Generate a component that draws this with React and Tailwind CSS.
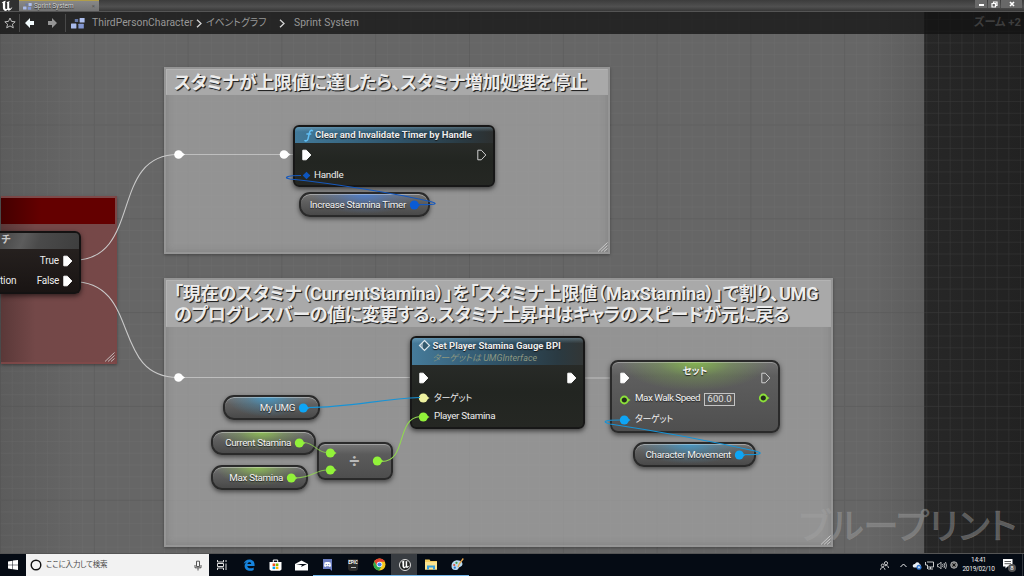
import React from "react";

const ExecPin = ({ hollow = false }) => (
  <svg className="block h-[12px] w-[11px] shrink-0" viewBox="0 0 11 12">
    <path
      d="M1.8 1.2H5.3L9.8 6L5.3 10.8H1.8Z"
      fill={hollow ? "none" : "#fff"}
      stroke={hollow ? "#d0d0d0" : "#fff"}
      strokeWidth="1"
      strokeLinejoin="round"
    />
  </svg>
);

const DataPin = ({ color, hollow = false }) => (
  <svg className="block h-[10px] w-[12px] shrink-0" viewBox="0 0 12 10">
    <path d="M8.2 3L11.6 5L8.2 7Z" fill={color} />
    <circle cx="5.3" cy="5" r={hollow ? 3.5 : 4.5} fill={hollow ? "#242b1c" : color} stroke={color} strokeWidth={hollow ? 1.8 : 0} />
  </svg>
);

const Grip = () => (
  <svg className="absolute bottom-0 right-0 h-[10px] w-[11px]" viewBox="0 0 11 10">
    <path d="M1 9.5L10.5 0.5M4 9.5L10.5 3.5M7 9.5L10.5 6.5" stroke="#d8d8d8" strokeWidth="1" fill="none" opacity="0.8" />
  </svg>
);

const Comment = ({ className, title, titleClass }) => (
  <section className={"absolute border-2 border-[#9c9c9c]/30 bg-[#a6a6a6]/70 shadow-[0_1px_3px_rgba(0,0,0,0.35),inset_0_0_7px_rgba(80,80,80,0.3)] " + className}>
    <div className={"border border-[#b3b3b3] border-r-[#a8a8a8] border-b-[#a8a8a8] bg-[#a9a9a9] pl-[7px] font-bold whitespace-pre text-[#ececec] [font-feature-settings:'palt'] [text-shadow:1px_1px_1px_#222,1px_1px_0_#444] " + titleClass}>
      {title}
    </div>
    <Grip />
  </section>
);

const GLOW = {
  blue: "bg-[radial-gradient(ellipse_42%_95%_at_50%_0%,rgba(70,130,225,0.8),rgba(70,130,225,0.3)_50%,transparent),linear-gradient(#747474,#606060_35%,#494949)]",
  sky: "bg-[radial-gradient(ellipse_45%_95%_at_46%_0%,rgba(60,160,215,0.8),rgba(60,160,215,0.3)_50%,transparent),linear-gradient(#747474,#606060_35%,#494949)]",
  green: "bg-[radial-gradient(ellipse_45%_90%_at_48%_0%,rgba(145,200,80,0.85),rgba(145,200,80,0.3)_50%,transparent),linear-gradient(#747474,#606060_35%,#494949)]",
};

const Getter = ({ className, glow, color, text }) => (
  <div className={"absolute flex h-[25px] items-center justify-end rounded-[11px] border-2 border-[#2a2a2a] text-[9.8px] tracking-[-0.32px] text-[#f2f2f2] shadow-[0_2px_4px_rgba(0,0,0,0.5),inset_0_1px_0_rgba(255,255,255,0.35)] " + GLOW[glow] + " " + className}>
    <span className="mr-[3px] whitespace-nowrap pt-px [text-shadow:0_1px_1px_#222]">{text}</span>
    <DataPin color={color} />
  </div>
);

const NODE = "absolute overflow-hidden rounded-[6px] border-2 border-[#171717] bg-[linear-gradient(#2e302e,#222521_60%,#252723)] text-[9.5px] text-[#ececec] shadow-[0_2px_5px_rgba(0,0,0,0.6)]";

const BreadChevron = () => (
  <svg className="h-[9px] w-[6px] shrink-0" viewBox="0 0 6 9"><path d="M1 .7L5 4.5L1 8.3" fill="none" stroke="#d4d4d4" strokeWidth="1.3" /></svg>
);

const GraphIcon = ({ className }) => (
  <svg className={className} viewBox="0 0 14 11">
    <rect x="3.8" y="1" width="3.4" height="3" fill="#6577a8" />
    <rect x="8.6" y="0" width="5" height="4.6" rx=".5" fill="#aebfee" />
    <rect x="0" y="5.6" width="5.4" height="4.8" rx=".5" fill="#a9baea" />
    <rect x="7.4" y="5.8" width="5.4" height="4.8" rx=".5" fill="#8296d2" />
  </svg>
);

const UnrealU = ({ className }) => (
  <svg className={className} viewBox="0 0 12 12">
    <path d="M.5 3.3C1.6 1.7 3 1 4.9.7L4.2 2V8.2C4.4 9.2 5.5 9.2 6.2 8.4V3L5.5 2.2L8.8 1L8.2 2.2V8L9.2 8.7L11.4 7C10.8 9 9.3 10.2 7.7 10.7L6.6 9.7L5 11C3 10.8 1.9 9.7 1.9 7.5V3.5C1.5 3 1 3 .5 3.3Z" fill="#fff" />
  </svg>
);

const TitleBar = () => (
  <header className="flex h-[11px] shrink-0 items-start bg-[linear-gradient(#3c3c3c,#505050_60%,#383838)]">
    <div className="flex h-[11px] w-[19px] bg-[#303030] pl-px"><UnrealU className="h-[12px] w-[12px]" /></div>
    <div className="flex h-[11px] w-[80px] items-center border-t border-[#b09d4a] bg-[linear-gradient(#888,#737373)] pl-[4px]">
      <GraphIcon className="h-[7px] w-[9px]" />
      <span className="ml-[2px] text-[6.4px] leading-none text-[#d0d0d0] [text-shadow:0_1px_1px_#222]">Sprint System</span>
      <span className="ml-auto mr-[4px] text-[6px] leading-none text-[#555]">×</span>
    </div>
    <div className="ml-auto mr-[2px] flex h-[8px] gap-px">
      <span className="flex w-[12px] items-center justify-center bg-[#686868]"><i className="mt-[2px] h-[1.5px] w-[5px] bg-white" /></span>
      <span className="flex w-[12px] items-center justify-center bg-[#686868]">
        <svg className="h-[7px] w-[7px]" viewBox="0 0 7 7"><path d="M2.5 2V1H6V4.5H5M1 2.5H4.5V6H1Z" stroke="#fff" fill="none" strokeWidth="1.2" /></svg>
      </span>
      <span className="flex w-[21px] items-center justify-center bg-[#686868]">
        <svg className="h-[6px] w-[6px]" viewBox="0 0 6 6"><path d="M1 1L5 5M5 1L1 5" stroke="#fff" strokeWidth="1.6" /></svg>
      </span>
    </div>
  </header>
);

const Breadcrumb = () => (
  <nav className="relative flex h-[23px] items-center border-t border-[#555] bg-[#111]/75 text-[10.3px] text-[#979797]">
    <svg className="ml-[4px] h-[12px] w-[12px]" viewBox="0 0 12 12"><path d="M6 1L7.5 4.4L11.2 4.8L8.4 7.2L9.3 10.8L6 8.9L2.7 10.8L3.6 7.2L.8 4.8L4.5 4.4Z" fill="none" stroke="#bbb" /></svg>
    <i className="ml-[3px] h-[18px] w-px bg-[#484848]" />
    <svg className="ml-[5px] h-[12px] w-[10px]" viewBox="0 0 10 12"><path d="M0 6L5 1V4H9V8H5V11Z" fill="#f2fbfd" /></svg>
    <svg className="ml-[12px] h-[12px] w-[10px]" viewBox="0 0 10 12"><path d="M10 6L5 1V4H1V8H5V11Z" fill="#959595" /></svg>
    <i className="ml-[8px] h-[18px] w-px bg-[#484848]" />
    <GraphIcon className="ml-[5px] h-[11px] w-[14px]" />
    <span className="ml-[7px] w-[101px] whitespace-nowrap tracking-[0.03px]">ThirdPersonCharacter</span>
    <span className="ml-[3px] flex"><BreadChevron /></span>
    <span className="ml-[4px] w-[63px] whitespace-nowrap text-[9.8px] [font-feature-settings:'palt']">イベントグラフ</span>
    <span className="ml-[10px] flex"><BreadChevron /></span>
    <span className="ml-[9px] whitespace-nowrap tracking-[0.1px]">Sprint System</span>
    <span className="ml-auto mr-[3px] whitespace-nowrap text-[11.3px] font-bold text-[#3d3d3d] [font-feature-settings:'palt']">ズーム +2</span>
  </nav>
);

const Wires = ({ children }) => (
  <svg className="pointer-events-none absolute inset-0 h-[576px] w-[1024px]" viewBox="0 0 1024 576" fill="none">{children}</svg>
);

const Reroute = ({ x, y }) => (
  <g fill="#fff"><circle cx={x} cy={y} r="4.3" /><path d={`M${x + 3} ${y - 2.5}L${x + 6.5} ${y}L${x + 3} ${y + 2.5}Z`} /></g>
);

const Canvas = () => (
  <div className="absolute left-0 top-[-11px] h-[576px] w-[1024px]">
    <div className="absolute inset-0 bg-[linear-gradient(90deg,#5c5c5c_0,#666_8%,#666_85%,#5c5c5c_90.2%,#272727_90.3%,#222_100%)]" />
    <svg className="absolute inset-0 h-full w-full">
      <defs>
        <pattern id="minor" width="11.725" height="11.725" patternUnits="userSpaceOnUse" y="30.7"><path d="M0 0H11.725M0 0V11.725" stroke="#888" strokeWidth="1" opacity=".2" /></pattern>
        <pattern id="major" width="93.8" height="93.8" patternUnits="userSpaceOnUse" y="30.7"><path d="M0 0H93.8M0 0V93.8" stroke="#333" strokeWidth="2" opacity=".22" /></pattern>
      </defs>
      <rect width="1024" height="576" fill="url(#minor)" />
      <rect width="1024" height="576" fill="url(#major)" />
    </svg>

    <section className="absolute left-px top-[196px] h-[168px] w-[116px] border-y-2 border-r-2 border-[#824a4a]/80 bg-[linear-gradient(90deg,#5a3838,#734848_30%,#774848)] shadow-[0_1px_3px_rgba(0,0,0,0.4)]">
      <div className="h-[26px] bg-[linear-gradient(90deg,#440000,#640000_35%)]" />
      <Grip />
    </section>
    <Comment className="left-[164px] top-[67px] h-[187px] w-[446px]" titleClass="h-[26px] text-[18px] leading-[26px] tracking-[-0.37px]" title="スタミナが上限値に達したら、スタミナ増加処理を停止" />
    <Comment
      className="left-[164px] top-[278px] h-[269px] w-[669px]"
      titleClass="h-[47px] text-[18px] leading-[21px] pt-[2px] tracking-[-0.36px]"
      title={<><span className="tracking-[-0.2px]">「現在のスタミナ（CurrentStamina）」を「スタミナ上限値（MaxStamina）」で割り、UMG</span>{"\nのプログレスバーの値に変更する。スタミナ上昇中はキャラのスピードが元に戻る"}</>}
    />

    <Wires>
      <g stroke="#c9c9c9" strokeWidth="1.1">
        <path d="M72 260.5C144 260.5 108 154.5 178 154.5" />
        <path d="M72 281.5C142 281.5 110 377.5 178 377.5" />
        <path d="M178 154.5H300M178 377.5H420M575 378H620" opacity=".8" />
      </g>
      <Reroute x={178.5} y={154.5} />
      <Reroute x={284} y={154.5} />
      <Reroute x={178.5} y={377.5} />
    </Wires>

    <article className="absolute left-0 top-[231px] h-[63px] w-[81px] overflow-hidden rounded-r-[6px] border-2 border-l-0 border-[#141212] bg-[linear-gradient(#2a2523,#191413)] text-[10px] text-[#ececec] shadow-[0_2px_5px_rgba(0,0,0,0.6)]">
      <div className="h-[16px] bg-[linear-gradient(110deg,#454545,#5c5c5c_30%,#4a4a4a_50%,#3e3e3e)] pl-px text-[10px] font-bold leading-[13px] text-[#c8c8c8]">チ</div>
      <div className="flex h-[20px] items-center justify-end pr-[6px] pt-[4px]">
        <span className="mr-[3px] mb-px tracking-[-0.15px]">True</span><ExecPin />
      </div>
      <div className="flex h-[21px] items-center pr-[6px] pt-[2px]">
        <span className="tracking-[-0.15px]">tion</span><span className="ml-auto mr-[3px] tracking-[-0.3px]">False</span><ExecPin />
      </div>
    </article>

    <article className={NODE + " left-[293px] top-[125px] h-[62px] w-[202px]"}>
      <div className="flex h-[16px] items-center bg-[linear-gradient(180deg,rgba(170,215,240,0.3),transparent_30%),linear-gradient(90deg,#427a9a,#30566d_50%,#2a3a42_85%,#2d3030)] pl-[8px] font-bold">
        <svg className="h-[13px] w-[11px]" viewBox="0 0 11 13"><path d="M9.7 2.2C8.6.7 7 1.2 6.5 3.5L5.1 9.6C4.7 11.6 3 12.6 1.5 11.2M3.4 5H8.3" fill="none" stroke="#61bff4" strokeWidth="1.5" /></svg>
        <span className="ml-px whitespace-nowrap [text-shadow:0_1px_1px_#111]">Clear and Invalidate Timer by Handle</span>
      </div>
      <div className="flex h-[23px] items-center justify-between pl-[6px] pr-[6px] pt-px"><ExecPin /><ExecPin hollow /></div>
      <div className="flex h-[18px] items-center pl-[7px]">
        <svg className="h-[9px] w-[9px]" viewBox="0 0 9 9"><path d="M4.5 .7L8.3 4.5L4.5 8.3L.7 4.5Z" fill="#0d55bd" /></svg>
        <span className="ml-[3px] mt-px text-[9.8px] tracking-[-0.25px]">Handle</span>
      </div>
    </article>
    <Getter className="left-[299px] top-[192px] w-[131px] pr-[7px]" glow="blue" color="#0a5bd6" text="Increase Stamina Timer" />

    <article className={NODE + " left-[410px] top-[336px] h-[93px] w-[175px]"}>
      <div className="flex h-[27px] bg-[linear-gradient(180deg,rgba(170,215,240,0.3),transparent_20%),linear-gradient(90deg,#467b9a,#31566c_45%,#2a3a42_85%,#323636)] pl-[6px]">
        <svg className="mt-[1px] h-[13px] w-[13px]" viewBox="0 0 13 13"><path d="M6.5 1.5L11.5 6.5L6.5 11.5L1.5 6.5Z" fill="#34596d" stroke="#d9e4ea" strokeWidth="1.2" /><path d="M1 6.5L5 2.5V10.5Z" fill="#d9e4ea" opacity=".5" /></svg>
        <div className="ml-[1.5px] whitespace-nowrap">
          <div className="h-[15px] pt-px font-bold leading-[14px] [text-shadow:0_1px_1px_#111]">Set Player Stamina Gauge BPI</div>
          <div className="text-[9px] italic leading-[10px] text-[#8b9781] [font-feature-settings:'palt']">ターゲットは UMGInterface</div>
        </div>
      </div>
      <div className="flex h-[25px] items-center justify-between pl-[6px] pr-[6px]"><ExecPin /><ExecPin /></div>
      <div className="flex h-[16px] items-center pl-[6px]"><DataPin color="#eef2a0" /><span className="ml-[4px] pt-px text-[9px] tracking-[-0.3px] [font-feature-settings:'palt']">ターゲット</span></div>
      <div className="flex h-[21px] items-center pl-[6px]"><DataPin color="#92f23a" /><span className="ml-[4px] whitespace-nowrap text-[9.8px] tracking-[-0.3px]">Player Stamina</span></div>
    </article>

    <article className="absolute left-[610px] top-[360px] h-[73px] w-[170px] rounded-[8px] border-2 border-[#2a2a2a] bg-[radial-gradient(ellipse_45%_42%_at_50%_0%,rgba(140,205,70,0.75),rgba(140,205,70,0.25)_50%,transparent),linear-gradient(#707070,#5e5e5e_20%,#4f4f4f)] text-[9.8px] text-[#f2f2f2] shadow-[0_2px_5px_rgba(0,0,0,0.55),inset_0_1px_0_rgba(255,255,255,0.3)]">
      <div className="flex h-[27px] items-center justify-between pl-[7px] pr-[7px]">
        <div className="pt-[4px]"><ExecPin /></div>
        <span className="pb-[8px] text-[9.5px] font-bold [font-feature-settings:'palt'] [text-shadow:0_1px_1px_#222]">セット</span>
        <div className="pt-[4px]"><ExecPin hollow /></div>
      </div>
      <div className="flex h-[19px] items-center pl-[7px] pr-[8px]">
        <div className="pt-[2px]"><DataPin color="#8be03a" hollow /></div><span className="ml-[4px] whitespace-nowrap tracking-[-0.5px] [text-shadow:0_1px_1px_#222]">Max Walk Speed</span>
        <span className="ml-[4px] mt-[2px] flex h-[13px] w-[31px] shrink-0 items-center justify-center border border-[#c4c4c4] text-[9.5px] text-[#e0e0e0]">600.0</span>
        <div className="mb-px ml-auto"><DataPin color="#8be03a" hollow /></div>
      </div>
      <div className="flex h-[22px] items-center pl-[7px] pt-px"><DataPin color="#0ea5f5" /><span className="ml-[4px] pt-px text-[9px] tracking-[-0.3px] [font-feature-settings:'palt']">ターゲット</span></div>
    </article>

    <Getter className="left-[223px] top-[395px] w-[97px] pr-[8px]" glow="sky" color="#0ea5f5" text="My UMG" />
    <Getter className="left-[211px] top-[430px] w-[105px] pr-[8px]" glow="green" color="#92f23a" text="Current Stamina" />
    <Getter className="left-[211px] top-[465px] w-[97px] pr-[8px]" glow="green" color="#92f23a" text="Max Stamina" />
    <Getter className="left-[633px] top-[442px] w-[123px] pr-[8px]" glow="sky" color="#0ea5f5" text="Character Movement" />

    <article className="absolute left-[317px] top-[442px] flex h-[38px] w-[76px] items-center justify-between rounded-[8px] border-2 border-[#2a2a2a] bg-[linear-gradient(#777,#5b5b5b_30%,#4e4e4e)] pl-[6px] pr-[7px] shadow-[0_2px_5px_rgba(0,0,0,0.55),inset_0_1px_0_rgba(255,255,255,0.3)]">
      <div className="flex flex-col gap-[7px]"><DataPin color="#92f23a" /><DataPin color="#92f23a" /></div>
      <span className="text-[18px] font-bold leading-none text-[#b9b9b9]">÷</span>
      <DataPin color="#92f23a" />
    </article>

    <Wires>
      <g stroke="#1558bd" strokeWidth="1.1">
        <path d="M301 175.5C286 175.5 283 178 290 179C330 183 400 194 432 202C439 204 434 205 418 204.5" />
      </g>
      <g stroke="#1793d6" strokeWidth="1.1">
        <path d="M308 407.5C350 407.5 380 399 420 397.5" />
        <path d="M620 420C603 420 602 422 610 424C650 430 710 441 755 451C764 453 762 455 743 454.5" />
      </g>
      <g stroke="#91d850" strokeWidth="1.1">
        <path d="M303 442.5C315 442.5 316 452.5 327 452.5" opacity=".7" />
        <path d="M295 478C312 478 316 470 327 470" opacity=".8" />
        <path d="M382 461.5C407 461.5 396 418 420 416.5" />
      </g>
    </Wires>

    <div className="absolute bottom-[24px] right-[7px] whitespace-nowrap text-[35.5px] font-medium leading-[50px] text-[#a2a2a2]/45 [font-feature-settings:'palt'] [-webkit-text-stroke:0.4px_rgba(162,162,162,0.35)]">ブループリント</div>
    <div className="absolute inset-x-0 bottom-[22px] h-px bg-[#555]" />
  </div>
);

const TaskItem = ({ children, open = false, active = false }) => (
  <div className={"flex h-[22px] w-[26px] shrink-0 items-center justify-center " + (active ? "bg-[#383c41] " : "") + (open ? "border-b border-[#76b9ed]" : "")}>{children}</div>
);

const Taskbar = () => (
  <footer className="flex h-[22px] shrink-0 items-center bg-[#050b14] text-white">
    <div className="flex w-[26px] justify-center">
      <svg className="h-[10px] w-[10px]" viewBox="0 0 10 10"><path d="M0 1.4L4.5.7V4.7H0ZM5 .6L10 0V4.7H5ZM0 5.2H4.5V9.2L0 8.6ZM5 5.2H10V10L5 9.3Z" fill="#fff" /></svg>
    </div>
    <div className="flex h-[22px] w-[183px] items-center bg-[#f2f2f2] pl-[4px] pr-[7px] text-[#4a4a4a]">
      <svg className="h-[12px] w-[12px]" viewBox="0 0 12 12"><circle cx="6" cy="6" r="4.8" fill="none" stroke="#111" strokeWidth="1.4" /></svg>
      <span className="ml-[4px] whitespace-nowrap text-[7.5px] tracking-[-0.2px] [font-feature-settings:'palt']">ここに入力して検索</span>
      <svg className="ml-auto h-[11px] w-[8px]" viewBox="0 0 8 11"><path d="M2.5 1.2H5.5V6.5H2.5ZM1 5V7.8H7V5M4 8V10.5" fill="none" stroke="#444" strokeWidth=".9" /></svg>
    </div>
    <TaskItem><svg className="h-[10px] w-[10px]" viewBox="0 0 10 10" fill="none" stroke="#ddd"><path d="M.5 0V2H6.5V0M.5 10V8H6.5V10M.5 3.5H6.5V6.5H.5ZM9 0V2M9 3.5V10" /></svg></TaskItem>
    <TaskItem><svg className="ml-[2px] h-[12px] w-[12px]" viewBox="0 0 12 12"><path d="M.5 5.5C1.3 2 3.5.4 6.3.4C9.8.4 11.6 2.8 11.6 5.8V7H4.3C4.5 9.5 8 10 10.7 8.4V10.9C7.5 12.7 1.8 12 1.6 7.3C1.6 5.4 2.5 4 4 3.1C2.4 3.5 1.2 4.4.5 5.5ZM4.4 5H8.2C8.2 2.6 4.9 2.6 4.4 5Z" fill="#1683dc" /></svg></TaskItem>
    <TaskItem><svg className="ml-[2px] h-[12px] w-[13px]" viewBox="0 0 13 12"><path d="M4.3 3V1H8.7V3" fill="none" stroke="#fff" /><path d="M.5 3H12.5V10.5L11 11.8H2L.5 10.5Z" fill="#fff" /><path d="M3.6 4.5H6.2V7H3.6Z" fill="#f25022" /><path d="M6.8 4.5H9.4V7H6.8Z" fill="#7fba00" /><path d="M3.6 7.6H6.2V10.1H3.6Z" fill="#00a4ef" /><path d="M6.8 7.6H9.4V10.1H6.8Z" fill="#ffb900" /></svg></TaskItem>
    <TaskItem><svg className="ml-[2px] h-[11px] w-[13px]" viewBox="0 0 13 11"><path d="M0 4L6.5 .5L13 4V10.5H0Z" fill="#fff" /><path d="M1 4H12L6 7L7 5.2Z" fill="#050b14" /></svg></TaskItem>
    <TaskItem open><svg className="ml-[2px] h-[12px] w-[11px]" viewBox="0 0 11 12"><path d="M1 0H10V12L8 10H1Z" fill="#6d7fc2" /><path d="M2.5 3.5L4.3 3H6.7L8.5 3.5L9 7.3L7.5 8L6.8 7.2H4.2L3.5 8L2 7.3Z" fill="#fff" /><circle cx="4.3" cy="5.6" r=".7" fill="#6d7fc2" /><circle cx="6.7" cy="5.6" r=".7" fill="#6d7fc2" /></svg></TaskItem>
    <TaskItem open>
      <div className="ml-[2px] flex h-[12px] w-[10px] flex-col items-center rounded-b-[3px] bg-[#2b2b2b] text-white">
        <span className="text-[4.5px] font-bold leading-[8px]">EPIC</span><i className="h-px w-[5px] bg-[#bbb]" />
      </div>
    </TaskItem>
    <TaskItem open><svg className="ml-[2px] h-[13px] w-[13px]" viewBox="0 0 13 13"><circle cx="6.5" cy="6.5" r="6" fill="#f7c81e" /><path d="M1.3 3.5A6 6 0 0 1 11.8 3.7H6.5L4 7.8Z" fill="#e44134" /><path d="M1.3 3.5A6 6 0 0 0 6 12.5L8.7 8.2L4.3 8.2Z" fill="#2da94f" /><circle cx="6.5" cy="6.5" r="2.8" fill="#fff" /><circle cx="6.5" cy="6.5" r="2.1" fill="#4285f4" /></svg></TaskItem>
    <TaskItem open active><div className="ml-[2px] flex h-[12px] w-[12px] items-center justify-center rounded-full border border-[#ddd] bg-[#222]"><UnrealU className="h-[9px] w-[9px]" /></div></TaskItem>
    <TaskItem open><svg className="ml-[2px] h-[11px] w-[12px]" viewBox="0 0 12 11"><path d="M0 .5H4.5L5.5 2H12V10.5H0Z" fill="#f6cf62" /><path d="M0 3H12V10.5H0Z" fill="#fce491" /><path d="M2 10.5V6.5H10V10.5H8V8.5H4V10.5Z" fill="#3aa0dc" /></svg></TaskItem>
    <TaskItem open><svg className="ml-[2px] h-[13px] w-[13px]" viewBox="0 0 13 13"><path d="M.5 8C.5 3.5 5 1.2 9 2.8C13 4.8 11.5 8.4 9 9C7 9.4 8 11.5 5.3 12C2 12.4.5 10.8 .5 8Z" fill="#b9d9ef" /><circle cx="3.2" cy="7" r="1.1" fill="#d94f3d" /><circle cx="5.5" cy="4.8" r="1.1" fill="#45a049" /><circle cx="3.8" cy="9.7" r="1.1" fill="#2b74c9" /><path d="M12.3 .5L8.5 5.5L7 9" stroke="#e9a84c" strokeWidth="1.3" fill="none" /></svg></TaskItem>

    <div className="ml-auto flex items-center">
      <svg className="h-[9px] w-[9px]" viewBox="0 0 9 9" fill="none" stroke="#ddd" strokeWidth=".9"><circle cx="6" cy="2.2" r="1.6" /><circle cx="2.7" cy="4.4" r="1.4" /><path d="M.5 8.8C.7 5.6 4.7 5.6 5 8.8M5 4.8C7 3.8 8.3 5 8.5 7" /></svg>
      <svg className="ml-[11px] h-[5px] w-[7px]" viewBox="0 0 7 5"><path d="M.5 4L3.5 1L6.5 4" fill="none" stroke="#eee" /></svg>
      <svg className="ml-[5px] h-[9px] w-[10px]" viewBox="0 0 10 9"><path d="M1 6C0 3.5 2 2.8 3 3C4 .5 7.5 1 7.6 3.3C9.5 3.4 9.5 6 8 6.4H2Z" fill="#e8eef5" /><circle cx="7" cy="6.3" r="2.5" fill="#2f76d2" /><path d="M5.8 6.3H8.2M7 5V7.5" stroke="#fff" strokeWidth=".7" /></svg>
      <svg className="ml-[3px] h-[9px] w-[9px]" viewBox="0 0 9 9"><path d="M2 1H8.5V6H3M5.5 6V8M3 8H8M.5 1V4H2.5V8" fill="none" stroke="#ddd" strokeWidth=".9" /></svg>
      <svg className="ml-[3px] h-[9px] w-[10px]" viewBox="0 0 10 9"><path d="M.5 3.2H2L4 1.2V7.8L2 5.8H.5ZM5.5 3Q6.5 4.5 5.5 6M7 2Q8.5 4.5 7 7M8.5 1Q10.5 4.5 8.5 8" fill="none" stroke="#ddd" strokeWidth=".8" /></svg>
      <svg className="ml-[3px] h-[8px] w-[8px]" viewBox="0 0 8 8"><circle cx="4" cy="4" r="3.3" fill="#777" stroke="#bbb" strokeWidth=".8" /><path d="M2.5 2.5L5.5 5.5M5.5 2.5L2.5 5.5" stroke="#111" /></svg>
      <div className="ml-[4px] w-[33px] text-center text-[6.5px] leading-[9.5px] tracking-[-0.25px] text-[#eee]"><div>14:41</div><div>2019/02/10</div></div>
      <div className="relative ml-[8px] h-[12px] w-[14px]">
        <svg className="h-[10px] w-[10px]" viewBox="0 0 10 10"><path d="M0 0H9.5V7.5H4.5L2.5 9.5V7.5H0Z" fill="#fff" /><path d="M1.5 2.5H8M1.5 4.7H8" stroke="#333" strokeWidth=".8" /></svg>
        <span className="absolute bottom-[-1px] right-px flex h-[8px] w-[8px] items-center justify-center rounded-full bg-[#555] text-[6px] leading-none">8</span>
      </div>
      <i className="ml-[5px] h-[22px] w-px bg-[#30353c]" /><i className="w-px" />
    </div>
  </footer>
);

export default function App() {
  return (
    <div className="flex h-[576px] w-[1024px] flex-col overflow-hidden bg-[#333] font-['Roboto','Noto_Sans_CJK_JP',sans-serif]">
      <TitleBar />
      <main className="relative h-[543px] overflow-hidden">
        <Canvas />
        <Breadcrumb />
      </main>
      <Taskbar />
    </div>
  );
}
